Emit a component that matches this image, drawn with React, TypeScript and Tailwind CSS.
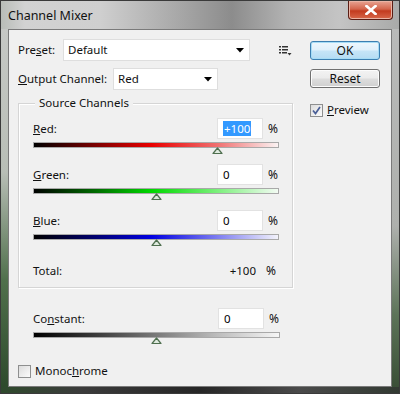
import React from 'react'

const font = { fontFamily: '"Noto Sans", "Liberation Sans", sans-serif' }

type Channel = {
  key: string
  label: React.ReactNode
  value: number
  gradient: string
  selected?: boolean
}

const channels: Channel[] = [
  {
    key: 'red',
    label: <><u>R</u>ed:</>,
    value: 100,
    gradient: 'bg-[linear-gradient(90deg,#000000_0%,#7a0000_25%,#e80000_48%,#f07070_75%,#fbf3f3_100%)]',
    selected: true
  },
  {
    key: 'green',
    label: <><u>G</u>reen:</>,
    value: 0,
    gradient: 'bg-[linear-gradient(90deg,#000000_0%,#006a00_25%,#00d800_48%,#7cf07c_75%,#f3fbf3_100%)]'
  },
  {
    key: 'blue',
    label: <><u>B</u>lue:</>,
    value: 0,
    gradient: 'bg-[linear-gradient(90deg,#000000_0%,#00006e_25%,#0000e0_48%,#7c7cf0_75%,#f3f3fb_100%)]'
  }
]

function Thumb({ value }: { value: number }) {
  // -200..+200 maps onto the full bar
  const pct = ((value + 200) / 400) * 100
  return (
    <svg
      width="11"
      height="8"
      viewBox="0 0 11 8"
      className="absolute top-full"
      style={{ left: `calc(${pct}% - 5.5px)` }}
    >
      <path d="M5.5 1 L10 6.5 L1 6.5 Z" fill="#dfeadf" stroke="#4f6f4f" strokeWidth="1.2" strokeLinejoin="round" />
    </svg>
  )
}

function Bar({ gradient, value }: { gradient: string; value: number }) {
  return (
    <div className={`relative mt-[3px] h-[6px] w-full border border-[#a9a9a9] ${gradient}`}>
      <Thumb value={value} />
    </div>
  )
}

function NumberBox({ value, selected }: { value: string; selected?: boolean }) {
  return (
    <div className="flex h-[21px] w-[46px] items-center border border-[#e2e2e2] bg-white pl-[5px]">
      {selected ? (
        <span className="bg-[#3399ff] px-[1px] leading-[15px] text-white">{value}</span>
      ) : (
        <span className="leading-[15px] text-black">{value}</span>
      )}
    </div>
  )
}

function Select({ value, width }: { value: string; width: string }) {
  return (
    <div className={`flex h-[22px] ${width} items-center justify-between border border-[#dedede] bg-white pl-[4px] pr-[5px]`}>
      <span>{value}</span>
      <svg width="8" height="5" viewBox="0 0 8 5">
        <path d="M0 0 H8 L4 4.5 Z" fill="#000" />
      </svg>
    </div>
  )
}

function Button({ children, primary }: { children: React.ReactNode; primary?: boolean }) {
  return (
    <div
      className={`flex h-[19px] w-[70px] items-center justify-center rounded-[3px] border text-[12px] ${
        primary
          ? 'border-[#3c7fb1] bg-[linear-gradient(180deg,#eef7fd_0%,#dff0fb_48%,#c6e5f7_52%,#b5dcf3_100%)] shadow-[inset_0_0_0_1px_#a6dcf6]'
          : 'border-[#707070] bg-[linear-gradient(180deg,#f3f3f3_0%,#ebebeb_48%,#dddddd_52%,#d0d0d0_100%)] shadow-[inset_0_0_0_1px_#fcfcfc]'
      }`}
    >
      {children}
    </div>
  )
}

function Checkbox({ checked }: { checked?: boolean }) {
  return (
    <div className="flex h-[13px] w-[13px] items-center justify-center border border-[#8e8f8f] bg-[linear-gradient(135deg,#dcdcdc_0%,#fbfbfb_100%)]">
      {checked && (
        <svg width="9" height="9" viewBox="0 0 9 9">
          <path d="M1 4.5 L3.5 7.5 L8 1" fill="none" stroke="#4a5f97" strokeWidth="1.7" />
        </svg>
      )}
    </div>
  )
}

function OptionsIcon() {
  return (
    <svg width="13" height="11" viewBox="0 0 13 11" className="ml-[29px]">
      <rect x="0" y="1" width="2" height="1.5" fill="#333" />
      <rect x="3" y="1" width="6" height="1.5" fill="#333" />
      <rect x="0" y="4" width="2" height="1.5" fill="#333" />
      <rect x="3" y="4" width="6" height="1.5" fill="#333" />
      <rect x="0" y="7" width="2" height="1.5" fill="#333" />
      <rect x="3" y="7" width="5" height="1.5" fill="#333" />
      <path d="M8.5 8 H12.5 L10.5 10.5 Z" fill="#333" />
    </svg>
  )
}

export default function App() {
  return (
    <div
      className="flex h-[394px] w-[400px] flex-col border border-[#3a3a3a] bg-[linear-gradient(90deg,#b9bdb8_0%,#d2d2d2_6%,#cfcfcf_25%,#a7a7a7_45%,#8c8c8c_58%,#b3b3b3_72%,#c4c4c4_85%,#a9aaa9_100%)] text-[11.5px] text-[#111]"
      style={font}
    >
      {/* Title bar */}
      <div className="flex h-[28px] items-start justify-between pl-[7px]">
        <span className="pt-[6px] text-[12.5px] text-[#111]">Channel Mixer</span>
        <div className="mr-[6px] flex h-[19px] w-[45px] items-center justify-center rounded-b-[4px] border border-t-0 border-[#5a1d14] bg-[linear-gradient(180deg,#e8a493_0%,#d4654c_45%,#c33b1f_55%,#d8674a_100%)] shadow-[inset_0_0_0_1px_#eab3a4]">
          <svg width="12" height="10" viewBox="0 0 12 10">
            <path d="M1.5 1 L10.5 9 M10.5 1 L1.5 9" stroke="#fff" strokeWidth="2.6" strokeLinecap="square" />
          </svg>
        </div>
      </div>

      <div className="flex flex-1">
        <div className="w-[7px] bg-[linear-gradient(180deg,#c6c8c5_0%,#b8beb6_40%,#50704c_70%,#2e4a2c_100%)]" />

        {/* Dialog body */}
        <div className="flex flex-1 border border-[#7a7a7a] bg-[#f0f0f0] pl-[9px] pt-[9px]">
          <div className="flex w-[275px] flex-col">
            <div className="flex h-[22px] items-center">
              <span className="w-[45px]">Pre<u>s</u>et:</span>
              <Select value="Default" width="w-[187px]" />
              <OptionsIcon />
            </div>

            <div className="mt-[7px] flex h-[22px] items-center">
              <span className="w-[95px]"><u>O</u>utput Channel:</span>
              <Select value="Red" width="w-[105px]" />
            </div>

            {/* Source Channels group */}
            <div className="relative mt-[13px] flex flex-col border border-[#d5d5d5] pb-[8px] pl-[14px] pr-[13px] pt-[14px] shadow-[inset_1px_1px_0_#ffffff,1px_1px_0_#ffffff]">
              <span className="absolute left-[16px] top-[-9px] bg-[#f0f0f0] px-[4px] leading-[16px]">
                Source Channels
              </span>

              {channels.map((c) => (
                <div key={c.key} className="mb-[16px] flex flex-col">
                  <div className="flex h-[21px] items-center">
                    <span className="flex-1">{c.label}</span>
                    <NumberBox value={c.value > 0 ? `+${c.value}` : `${c.value}`} selected={c.selected} />
                    <span className="w-[16px] pl-[5px] text-[12px]">%</span>
                  </div>
                  <Bar gradient={c.gradient} value={c.value} />
                </div>
              ))}

              <div className="mt-[7px] flex h-[16px] items-center">
                <span className="flex-1">Total:</span>
                <span className="w-[46px] pr-[7px] text-right">+100</span>
                <span className="w-[16px] pl-[3px] text-[12px]">%</span>
              </div>
            </div>

            <div className="ml-[15px] mr-[13px] mt-[20px] flex flex-col">
              <div className="flex h-[21px] items-center">
                <span className="flex-1">Co<u>n</u>stant:</span>
                <NumberBox value="0" />
                <span className="w-[16px] pl-[5px] text-[12px]">%</span>
              </div>
              <Bar gradient="bg-[linear-gradient(90deg,#000000_0%,#3a3a3a_25%,#7a7a7a_50%,#bdbdbd_75%,#f6f6f6_100%)]" value={0} />
            </div>

            <div className="mt-[25px] flex h-[16px] items-center gap-[4px]">
              <Checkbox />
              <span>Monoc<u>h</u>rome</span>
            </div>
          </div>

          <div className="ml-[17px] flex w-[70px] flex-col">
            <div className="mt-[2px]">
              <Button primary>OK</Button>
            </div>
            <div className="mt-[9px]">
              <Button>Reset</Button>
            </div>
            <div className="mt-[14px] flex h-[16px] items-center gap-[4px]">
              <Checkbox checked />
              <span><u>P</u>review</span>
            </div>
          </div>
        </div>

        <div className="w-[7px] bg-[linear-gradient(180deg,#b9bab9_0%,#aeb0ad_55%,#5c7358_80%,#3a4f37_100%)]" />
      </div>

      <div className="h-[6px] bg-[linear-gradient(90deg,#2f4a2d_0%,#3b3b3b_20%,#262626_50%,#4a4a4a_75%,#323a32_100%)]" />
    </div>
  )
}
